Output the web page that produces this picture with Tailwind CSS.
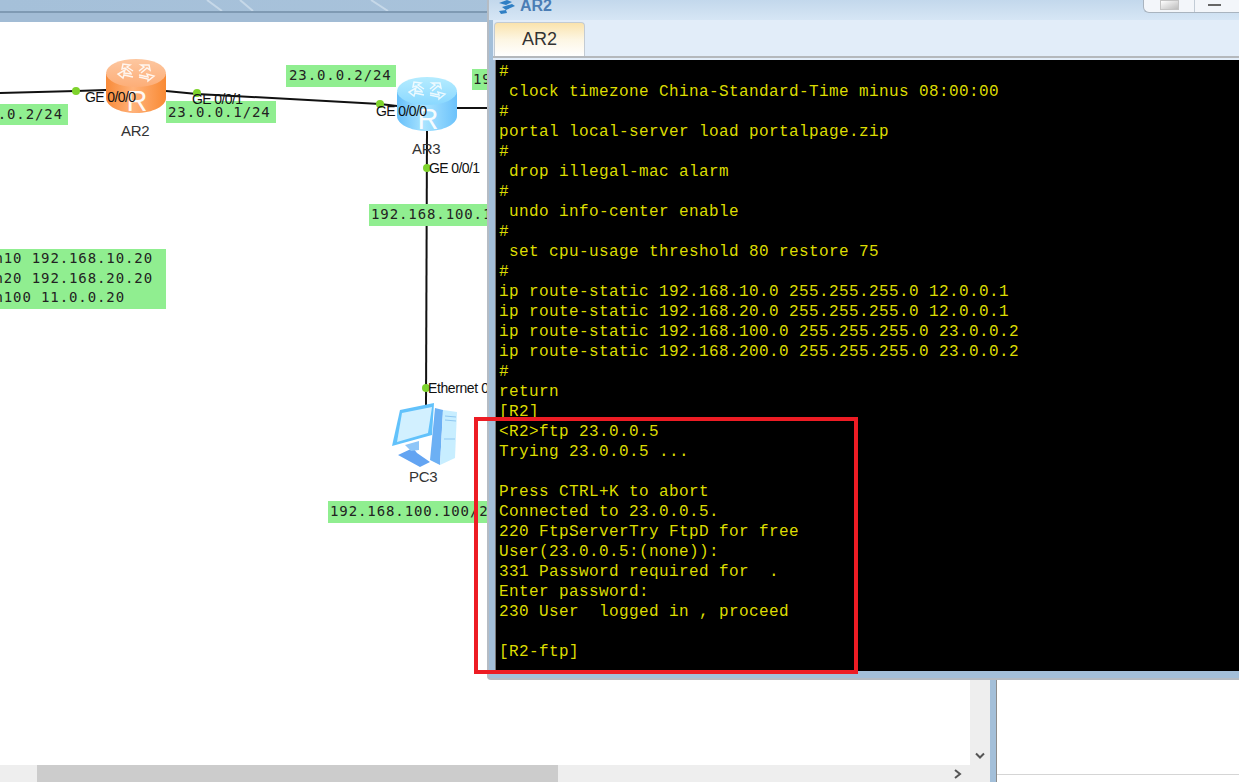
<!DOCTYPE html>
<html lang="en">
<head>
    <meta charset="UTF-8">
    <title>AR2 console</title>
    <script src="https://cdn.jsdelivr.net/npm/@tailwindcss/browser@4"></script>
</head>
<body class="w-[1239px] h-[782px] overflow-hidden bg-white relative font-['Liberation_Sans',sans-serif]">
    <!-- App chrome -->
    <div class="h-[22px] flex flex-col">
        <div class="h-[11px] bg-gradient-to-r from-[#a5c0d9] to-[#adc6dd] relative">
            <svg class="absolute left-0 top-0" width="490" height="11" viewBox="0 0 490 11">
                <path d="M207 0 L222 11 M240 0 L253 11 M371 0 L388 11" stroke="#c6d8e8" stroke-width="2" fill="none"/>
            </svg>
        </div>
        <div class="h-[2px] bg-[#7f9ab3]"></div>
        <div class="h-[9px] bg-[#a2bcd5]"></div>
    </div>

    <div class="flex h-[760px]">
        <!-- Topology canvas -->
        <div class="w-[990px] flex flex-col">
            <div class="flex flex-1 min-h-0">
                <div class="relative w-[970px] overflow-hidden -mt-[22px]" id="canvas">
                    <svg class="absolute left-0 top-0" width="970" height="743" viewBox="0 0 970 743">
                        <path d="M0 93 L76 91 L106 90" stroke="#111" stroke-width="2" fill="none"/>
                        <path d="M166 91 L197 94 L380 104 L397 106" stroke="#111" stroke-width="2" fill="none"/>
                        <path d="M457 108 L490 108" stroke="#111" stroke-width="2" fill="none"/>
                        <path d="M427 130 L426 405" stroke="#111" stroke-width="2" fill="none"/>
                    </svg>

                    <!-- IP labels -->
                    <div class="absolute left-0 top-[104px] w-[68px] h-[21px] bg-[#90ee90] font-['DejaVu_Sans_Mono',monospace] text-[14px] leading-[21px] tracking-[0.9px] text-[#222] whitespace-nowrap flex justify-end pr-[5px]">.0.2/24</div>
                    <div class="absolute left-[166px] top-[101px] w-[110px] h-[22px] pl-[2px] bg-[#90ee90] font-['DejaVu_Sans_Mono',monospace] text-[14px] leading-[22px] tracking-[0.9px] text-[#222] whitespace-nowrap">23.0.0.1/24</div>
                    <div class="absolute left-[286px] top-[65px] w-[110px] h-[22px] pl-[3px] bg-[#90ee90] font-['DejaVu_Sans_Mono',monospace] text-[14px] leading-[20px] tracking-[0.9px] text-[#222] whitespace-nowrap">23.0.0.2/24</div>
                    <div class="absolute left-[472px] top-[69px] w-[30px] h-[21px] pl-[1px] bg-[#90ee90] font-['DejaVu_Sans_Mono',monospace] text-[14px] leading-[21px] tracking-[0.9px] text-[#222] whitespace-nowrap">192</div>
                    <div class="absolute left-[369px] top-[204px] w-[130px] h-[22px] pl-[2px] bg-[#90ee90] font-['DejaVu_Sans_Mono',monospace] text-[14px] leading-[20px] tracking-[0.9px] text-[#222] whitespace-nowrap overflow-hidden">192.168.100.1/24</div>
                    <div class="absolute left-[328px] top-[501px] w-[170px] h-[22px] pl-[2px] bg-[#90ee90] font-['DejaVu_Sans_Mono',monospace] text-[14px] leading-[20px] tracking-[0.9px] text-[#222] whitespace-nowrap overflow-hidden">192.168.100.100/24</div>
                    <div class="absolute left-0 top-[249px] w-[166px] h-[60px] bg-[#90ee90] font-['DejaVu_Sans_Mono',monospace] text-[14px] leading-[19.5px] tracking-[0.9px] text-[#222] whitespace-nowrap flex flex-col items-end pr-[13px]">
                        <div>n10 192.168.10.20</div>
                        <div>n20 192.168.20.20</div>
                        <div class="pr-[28px]">n100 11.0.0.20</div>
                    </div>

                    <!-- AR2 -->
                    <svg class="absolute left-[106px] top-[59px]" width="60" height="54" viewBox="0 0 60 54">
                        <defs>
                            <linearGradient id="orange" x1="0" x2="1" y1="0" y2="0">
                                <stop offset="0" stop-color="#f88a38"/><stop offset="0.45" stop-color="#ffb27a"/><stop offset="1" stop-color="#f98a34"/>
                            </linearGradient>
                            <linearGradient id="orangeTop" x1="0" x2="0" y1="0" y2="1">
                                <stop offset="0" stop-color="#fdc7a0"/><stop offset="1" stop-color="#fdae78"/>
                            </linearGradient>
                            <linearGradient id="blue" x1="0" x2="1" y1="0" y2="0">
                                <stop offset="0" stop-color="#66bffa"/><stop offset="0.45" stop-color="#a9e4ff"/><stop offset="1" stop-color="#6cc2fb"/>
                            </linearGradient>
                            <linearGradient id="blueTop" x1="0" x2="0" y1="0" y2="1">
                                <stop offset="0" stop-color="#b5ecff"/><stop offset="1" stop-color="#8ad8ff"/>
                            </linearGradient>
                        </defs>
                        <path d="M0 15 V39 C0 47 13 54 30 54 C47 54 60 47 60 39 V15 Z" fill="url(#orange)"/>
                        <ellipse cx="30" cy="14" rx="30" ry="14" fill="url(#orangeTop)"/>
                        <path d="M27 12 L21 8 L24 6 L17 5 L16 10 L19 9 L25 14 M33 12 L38 8 L35 6 L43 6 L44 11 L41 9 L35 14 M26 15 L18 14 L19 11 L12 15 L17 19 L18 16 L27 18 M33 16 L42 18 L41 15 L48 17 L42 22 L42 20 L33 18" fill="none" stroke="#fff" stroke-width="1.5" opacity="0.85"/>
                        <text x="31" y="52" text-anchor="middle" font-size="29" font-family="Liberation Sans" fill="#fff" opacity="0.92">R</text>
                    </svg>
                    <!-- AR3 -->
                    <svg class="absolute left-[397px] top-[77px]" width="60" height="54" viewBox="0 0 60 54">
                        <path d="M0 15 V39 C0 47 13 54 30 54 C47 54 60 47 60 39 V15 Z" fill="url(#blue)"/>
                        <ellipse cx="30" cy="14" rx="30" ry="14" fill="url(#blueTop)"/>
                        <path d="M27 12 L21 8 L24 6 L17 5 L16 10 L19 9 L25 14 M33 12 L38 8 L35 6 L43 6 L44 11 L41 9 L35 14 M26 15 L18 14 L19 11 L12 15 L17 19 L18 16 L27 18 M33 16 L42 18 L41 15 L48 17 L42 22 L42 20 L33 18" fill="none" stroke="#fff" stroke-width="1.5" opacity="0.8"/>
                        <text x="31" y="52" text-anchor="middle" font-size="29" font-family="Liberation Sans" fill="#fff" opacity="0.92">R</text>
                    </svg>
                    <!-- PC3 -->
                    <svg class="absolute left-[391px] top-[403px]" width="68" height="66" viewBox="0 0 68 66">
                        <path d="M44 5 L52 7 L49 62 L39 57 Z" fill="#6cb0f4"/>
                        <path d="M52 7 L66 9 L64 55 L49 62 Z" fill="#c8eeff"/>
                        <path d="M54 13 L65 14 M54 17 L65 18 M53 36 L64 36" stroke="#8fc8f2" stroke-width="1"/>
                        <path d="M9 7 L43 0 L41 32 L1 43 Z" fill="#62c2fb"/>
                        <path d="M11 10 L41 4 L37 30 L6 39 Z" fill="#d2f0ff"/>
                        <path d="M7 52 L22 45 L26 50 L39 59 L29 64 Z" fill="#63a4f2"/>
                        <path d="M14 42 L28 38 L28 47 L20 48 Z" fill="#8fc6f8"/>
                    </svg>

                    <!-- Port dots -->
                    <div class="absolute left-[72px] top-[87px] w-2 h-2 rounded-full bg-[#7ed32c]"></div>
                    <div class="absolute left-[193px] top-[89px] w-2 h-2 rounded-full bg-[#7ed32c]"></div>
                    <div class="absolute left-[376px] top-[100px] w-2 h-2 rounded-full bg-[#7ed32c]"></div>
                    <div class="absolute left-[423px] top-[164px] w-2 h-2 rounded-full bg-[#7ed32c]"></div>
                    <div class="absolute left-[422px] top-[384px] w-2 h-2 rounded-full bg-[#7ed32c]"></div>

                    <!-- Port and device names -->
                    <div class="absolute left-[85px] top-[89px] text-[14px] leading-4 tracking-[-0.6px] text-[#111] whitespace-nowrap">GE 0/0/0</div>
                    <div class="absolute left-[192px] top-[91px] text-[14px] leading-4 tracking-[-0.6px] text-[#111] whitespace-nowrap">GE 0/0/1</div>
                    <div class="absolute left-[376px] top-[103px] text-[14px] leading-4 tracking-[-0.6px] text-[#111] whitespace-nowrap">GE 0/0/0</div>
                    <div class="absolute left-[429px] top-[160px] text-[14px] leading-4 tracking-[-0.6px] text-[#111] whitespace-nowrap">GE 0/0/1</div>
                    <div class="absolute left-[428px] top-[380px] text-[14px] leading-4 tracking-[-0.4px] text-[#111] whitespace-nowrap">Ethernet 0/0/1</div>
                    <div class="absolute left-[121px] top-[123px] text-[15px] leading-4 tracking-[-0.3px] text-[#333] whitespace-nowrap">AR2</div>
                    <div class="absolute left-[412px] top-[141px] text-[15px] leading-4 tracking-[-0.3px] text-[#333] whitespace-nowrap">AR3</div>
                    <div class="absolute left-[409px] top-[469px] text-[15px] leading-4 tracking-[-0.3px] text-[#333] whitespace-nowrap">PC3</div>
                </div>
                <!-- Vertical scrollbar -->
                <div class="w-5 bg-[#eeeeee] flex flex-col justify-end items-center pb-[5px]">
                    <svg width="10" height="8" viewBox="0 0 10 8"><path d="M1 1.5 L5 5.5 L9 1.5" stroke="#555" stroke-width="2" fill="none"/></svg>
                </div>
            </div>
            <!-- Horizontal scrollbar -->
            <div class="h-[17px] bg-[#eeeeee] flex items-center pl-[37px] relative">
                <div class="w-[521px] h-full bg-[#cccccc]"></div>
                <svg class="ml-auto mr-[27px]" width="10" height="10" viewBox="0 0 10 10"><path d="M2 1 L7 5 L2 9" stroke="#555" stroke-width="2" fill="none"/></svg>
            </div>
        </div>
        <!-- Splitter -->
        <div class="w-[7px] bg-[#a3bfd9] border-r border-[#8c8c8c]"></div>
        <!-- Right panel -->
        <div class="flex-1 flex flex-col">
            <div class="h-[752px]"></div>
            <div class="h-px bg-[#d5d5d5]"></div>
        </div>
    </div>

    <!-- Console window -->
    <div class="absolute left-[487px] top-0 w-[752px] h-[680px] flex flex-col bg-[#a3bfd9] border-l-2 border-b-2 border-[#b5bcc4] rounded-bl-sm">
        <!-- Title bar -->
        <div class="h-[20px] flex items-start bg-gradient-to-b from-[#c3d8ec] to-[#d6e6f5] relative overflow-hidden">
            <svg class="ml-[9px] -mt-[3px]" width="18" height="18" viewBox="0 0 18 18">
                <path d="M1 6 L9 3 L14 5 L8 8 Z M4 10 L14 7 L17 9 L8 13 Z M1 14 L8 13 L9 16 L3 17 Z" fill="#2f7fc4"/>
            </svg>
            <span class="ml-[4px] -mt-[4px] text-[16px] font-bold leading-5 text-[#4b7db5]">AR2</span>
            <div class="ml-auto flex h-[13px] w-[96px] bg-[#f3f6fa] border-l border-b border-[#a9b4bf] rounded-bl-md">
                <div class="w-[51px] border-r border-[#c2ccd6] flex justify-center">
                    <div class="w-[19px] h-[10px] bg-gradient-to-br from-[#ffffff] to-[#bdbdbd] border border-[#c4c4c4]"></div>
                </div>
                <div class="flex-1 flex justify-start pl-[13px] pt-[4px]">
                    <div class="w-[13px] h-[2px] bg-[#666]"></div>
                </div>
            </div>
        </div>
        <!-- Tab strip -->
        <div class="ml-[4px] h-[38px] bg-[#e2edf9] border-b-2 border-[#b4b8bc] flex items-end pt-[2px]">
            <div class="ml-[1px] w-[91px] h-[34px] rounded-t-[4px] border border-b-0 border-[#c3cbd3] bg-gradient-to-b from-[#fae3ac] via-[#fdf6e3] to-white flex items-center justify-center text-[18px] text-[#333]">AR2</div>
        </div>
        <div class="ml-[4px] h-[2px] bg-[#e2edf9]"></div>
        <!-- Terminal -->
        <pre class="ml-[6px] h-[611px] bg-black pt-[2px] pl-[3px] font-['Liberation_Mono',monospace] text-[16px] font-normal leading-5 tracking-[0.4px] text-[#dcdc00] overflow-hidden border-l border-[#777]">#
 clock timezone China-Standard-Time minus 08:00:00
#
portal local-server load portalpage.zip
#
 drop illegal-mac alarm
#
 undo info-center enable
#
 set cpu-usage threshold 80 restore 75
#
ip route-static 192.168.10.0 255.255.255.0 12.0.0.1
ip route-static 192.168.20.0 255.255.255.0 12.0.0.1
ip route-static 192.168.100.0 255.255.255.0 23.0.0.2
ip route-static 192.168.200.0 255.255.255.0 23.0.0.2
#
return
[R2]
&lt;R2&gt;ftp 23.0.0.5
Trying 23.0.0.5 ...

Press CTRL+K to abort
Connected to 23.0.0.5.
220 FtpServerTry FtpD for free
User(23.0.0.5:(none)):
331 Password required for  .
Enter password:
230 User  logged in , proceed

[R2-ftp]</pre>
    </div>

    <!-- Red annotation box -->
    <div class="absolute left-[474px] top-[417px] w-[384px] h-[257px] border-[4px] border-[#ed1c24]"></div>
</body>
</html>
